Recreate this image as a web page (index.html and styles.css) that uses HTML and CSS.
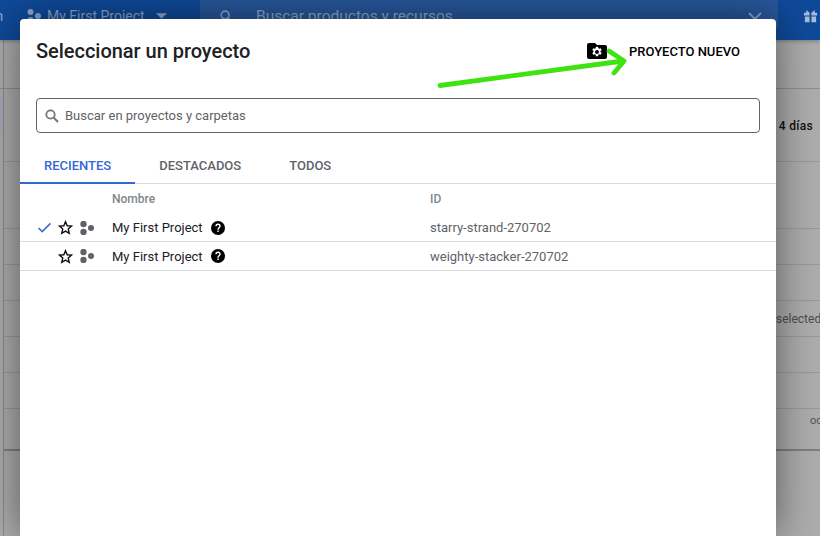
FILE: index.html
```html
<!DOCTYPE html>
<html lang="es">
<head>
<meta charset="utf-8">
<title>Seleccionar un proyecto</title>
<link rel="stylesheet" href="styles.css">
</head>
<body>
<div class="page">
  <header class="topbar">
    <span class="top-edge">n</span>
    <span class="top-project">
      <svg class="i18" viewBox="0 0 14 14"><circle cx="3.500" cy="3" r="3"/><circle cx="3.500" cy="11" r="3"/><circle cx="11" cy="7" r="3"/></svg>
      My First Project
      <svg class="caret" viewBox="0 0 12 6"><path d="M0 0h12L6 6z"/></svg>
    </span>
    <div class="top-search">
      <svg class="top-search-icon" viewBox="0 0 14 14"><circle cx="5.500" cy="5.500" r="4.200" fill="none" stroke="currentColor" stroke-width="1.800"/><path d="M8.800 8.800L13 13" stroke="currentColor" stroke-width="2"/></svg>
      <span class="top-search-text">Buscar productos y recursos</span>
      <svg class="top-chevron" viewBox="0 0 14 8"><path d="M1 1l6 6 6-6" fill="none" stroke="currentColor" stroke-width="1.800"/></svg>
    </div>
    <svg class="top-gift" viewBox="0 0 16 16"><path d="M1 4h6v3H1zM9 4h6v3H9zM2 8h5v6H2zM9 8h5v6H9zM3.500 1l3.500 3H3.500zM12.500 1L9 4h3.500z"/></svg>
  </header>
  <main class="behind">
    <div class="behind-row r48"></div>
    <div class="behind-body">
      <div class="rail"><span class="rail-item"></span></div>
      <div class="rows">
        <div class="behind-row r73"><span class="days">4 días</span></div>
        <div class="behind-row r67"></div>
        <div class="behind-row r36"></div>
        <div class="behind-row r36"></div>
        <div class="behind-row r36"><span class="selected">selected</span></div>
        <div class="behind-row r36"></div>
        <div class="behind-row r36"></div>
        <div class="behind-row r42"><span class="oc">oc</span></div>
      </div>
    </div>
  </main>
</div>

<section class="dialog">
  <div class="dialog-head">
    <h1 class="title">Seleccionar un proyecto</h1>
    <div class="new-project">
      <svg class="folder" viewBox="0 0 20 16"><path fill-rule="evenodd" d="M2 0h6l2 2h8a2 2 0 0 1 2 2v10a2 2 0 0 1-2 2H2a2 2 0 0 1-2-2V2a2 2 0 0 1 2-2zm9 3.800H9l-.4 1.500-.8.500-1.500-.5-1 1.700 1.200 1v1l-1.200 1 1 1.700 1.500-.5.800.5.400 1.500h2l.4-1.500.800-.5 1.500.5 1-1.700-1.200-1v-1l1.200-1-1-1.700-1.500.5-.800-.5zM10 7a2 2 0 1 1 0 4 2 2 0 0 1 0-4z"/></svg>
      <span class="new-label">PROYECTO NUEVO</span>
    </div>
  </div>
  <div class="search">
    <svg class="search-icon" viewBox="0 0 14 14"><circle cx="5.500" cy="5.500" r="4.200" fill="none" stroke="#757575" stroke-width="1.800"/><path d="M8.800 8.800L13 13" stroke="#757575" stroke-width="2"/></svg>
    <span class="search-text">Buscar en proyectos y carpetas</span>
  </div>
  <nav class="tabs">
    <span class="tab active">RECIENTES</span>
    <span class="tab">DESTACADOS</span>
    <span class="tab">TODOS</span>
  </nav>
  <div class="thead">
    <span class="col-icons"></span>
    <span class="col-name">Nombre</span>
    <span class="col-id">ID</span>
  </div>
  <div class="row first">
    <span class="col-icons">
      <svg class="check" viewBox="0 0 16 12"><path d="M1.500 6.500l4 4L14.500 1.500" fill="none" stroke="#3367d6" stroke-width="1.600"/></svg>
      <svg class="star" viewBox="0 0 16 16"><path d="M8 1.800l1.800 4.300 4.700.4-3.600 3.100 1.100 4.600L8 11.800l-4 2.400 1.100-4.600-3.600-3.100 4.700-.4z" fill="none" stroke="#111" stroke-width="1.500"/></svg>
      <svg class="nodes" viewBox="0 0 14 14"><circle cx="3.500" cy="3" r="3.200"/><circle cx="3.500" cy="11" r="3.200"/><circle cx="11" cy="7" r="3"/></svg>
    </span>
    <span class="col-name">My First Project
      <svg class="help" viewBox="0 0 14 14"><circle cx="7" cy="7" r="7"/><path d="M4.300 5.300a2.700 2.700 0 0 1 5.400 0c0 1.800-2 1.900-2 3.500H6.300c0-2.300 2-2.400 2-3.500a1.300 1.300 0 0 0-2.600 0zM6.300 9.600h1.400V11H6.300z" fill="#fff"/></svg>
    </span>
    <span class="col-id">starry-strand-270702</span>
  </div>
  <div class="row">
    <span class="col-icons">
      <span class="check-gap"></span>
      <svg class="star" viewBox="0 0 16 16"><path d="M8 1.800l1.800 4.300 4.700.4-3.600 3.100 1.100 4.600L8 11.800l-4 2.400 1.100-4.600-3.600-3.100 4.700-.4z" fill="none" stroke="#111" stroke-width="1.500"/></svg>
      <svg class="nodes" viewBox="0 0 14 14"><circle cx="3.500" cy="3" r="3.200"/><circle cx="3.500" cy="11" r="3.200"/><circle cx="11" cy="7" r="3"/></svg>
    </span>
    <span class="col-name">My First Project
      <svg class="help" viewBox="0 0 14 14"><circle cx="7" cy="7" r="7"/><path d="M4.300 5.300a2.700 2.700 0 0 1 5.400 0c0 1.800-2 1.900-2 3.500H6.300c0-2.300 2-2.400 2-3.500a1.300 1.300 0 0 0-2.600 0zM6.300 9.600h1.400V11H6.300z" fill="#fff"/></svg>
    </span>
    <span class="col-id">weighty-stacker-270702</span>
  </div>
</section>

<svg class="arrow" viewBox="0 0 820 536"><path d="M440 85.500L623 61M609 51L624 61L614 73" fill="none" stroke="#3fe312" stroke-width="4.800" stroke-linecap="round" stroke-linejoin="round"/></svg>
</body>
</html>
```

FILE: styles.css
```css
* { box-sizing: border-box; }
html, body { margin: 0; height: 100%; overflow: hidden; }
body { font-family: Roboto, "Liberation Sans", sans-serif; background: #adadad; color: #000; }

.page { height: 536px; display: flex; flex-direction: column; }
.topbar { flex: none; height: 40px; background: #0f4a9a; display: flex; align-items: center; color: #8fa8cf; position: relative; box-shadow: 0 1px 4px rgba(0,0,0,.3); }
.top-edge { width: 27px; font-size: 15px; margin-top: -8px; text-indent: -5px; overflow: hidden; }
.top-project { display: flex; align-items: center; gap: 6px; width: 173px; font-size: 14px; margin-top: -8px; }
.i18 { width: 14px; height: 14px; fill: #8fa8cf; }
.caret { width: 11px; height: 6px; fill: #8fa8cf; margin-left: 5px; }
.top-search { width: 578px; height: 32px; align-self: flex-start; background: #27589c; border-radius: 0 0 6px 6px; display: flex; align-items: center; padding: 0 16px 0 20px; }
.top-search-icon { width: 13px; height: 13px; color: #8fa8cf; }
.top-search-text { flex: 1; margin-left: 23px; font-size: 15.500px; }
.top-chevron { width: 14px; height: 8px; }
.top-gift { width: 15px; height: 15px; fill: #a9bcdb; margin: -8px 0 0 25px; flex: none; }

.behind { flex: 1; background: #adadad; display: flex; flex-direction: column; }
.behind-body { flex: 1; display: flex; }
.rail { flex: none; width: 4px; margin-top: -49px; padding-top: 57px; border-right: 1px solid #8a8a8a; }
.rail-item { display: block; height: 36px; background: #a6abb6; }
.rows { flex: 1; display: flex; flex-direction: column; }
.behind-row { display: flex; align-items: center; justify-content: flex-end; border-bottom: 1px solid #999; flex: none; }
.r48 { height: 49px; border-bottom-color: #8e8e8e; }
.r73 { height: 73px; padding: 2px 7px 0 0; }
.r67 { height: 67px; }
.r36 { height: 36px; }
.r42 { height: 42px; align-items: flex-start; border-bottom: 2px solid #7f7f7f; }
.days { font-size: 12px; font-weight: 500; color: #111; letter-spacing: .3px; }
.selected { font-size: 12px; color: #4d4d4d; width: 44px; white-space: nowrap; overflow: hidden; }
.oc { font-size: 11px; color: #555; width: 10px; overflow: hidden; margin-top: 5px; }

.dialog { position: absolute; left: 20px; top: 19px; width: 756px; height: 517px; background: #fff; border-radius: 4px 4px 0 0; box-shadow: 0 0 40px rgba(0,0,0,.5); display: flex; flex-direction: column; }
.dialog-head { height: 79px; padding: 20px 36px 0 16px; display: flex; justify-content: space-between; align-items: flex-start; flex: none; }
.title { margin: 0; font-size: 20px; line-height: 24px; font-weight: 500; color: #202124; letter-spacing: -.03px; }
.new-project { display: flex; align-items: center; gap: 22px; height: 24px; }
.folder { width: 20px; height: 16px; fill: #000; }
.new-label { font-size: 13px; font-weight: 500; color: #000; }

.search { flex: none; margin: 0 16px; height: 35px; border: 1px solid #5f6368; border-radius: 4px; display: flex; align-items: center; padding-left: 8px; }
.search-icon { width: 14px; height: 14px; }
.search-text { margin-left: 6px; font-size: 13px; color: #5f6368; }

.tabs { flex: none; margin-top: 16px; height: 35px; display: flex; border-bottom: 1px solid #dadce0; }
.tab { padding: 9px 24px 0; font-size: 13px; font-weight: 500; color: #5f6368; }
.tab.active { color: #3367d6; border-bottom: 2px solid #3367d6; height: 35px; }

.thead, .row { flex: none; display: flex; align-items: center; }
.thead { height: 30px; font-size: 12px; font-weight: 500; color: #80868b; }
.row { height: 29px; font-size: 13px; color: #202124; border-bottom: 1px solid #dadce0; }
.row.first { height: 28px; }
.col-icons { width: 92px; padding-left: 17px; display: flex; align-items: center; }
.col-name { width: 318px; display: flex; align-items: center; gap: 8px; }
.col-id { color: #5f6368; }
.thead .col-id { color: #80868b; }

.check { width: 15px; height: 11px; }
.check-gap { width: 15px; }
.star { width: 15px; height: 15px; margin-left: 6px; flex: none; }
.nodes { width: 14px; height: 14px; fill: #5f6368; margin-left: 7px; }
.help { width: 14px; height: 14px; fill: #000; }

.arrow { position: absolute; left: 0; top: 0; width: 820px; height: 536px; pointer-events: none; }
```
